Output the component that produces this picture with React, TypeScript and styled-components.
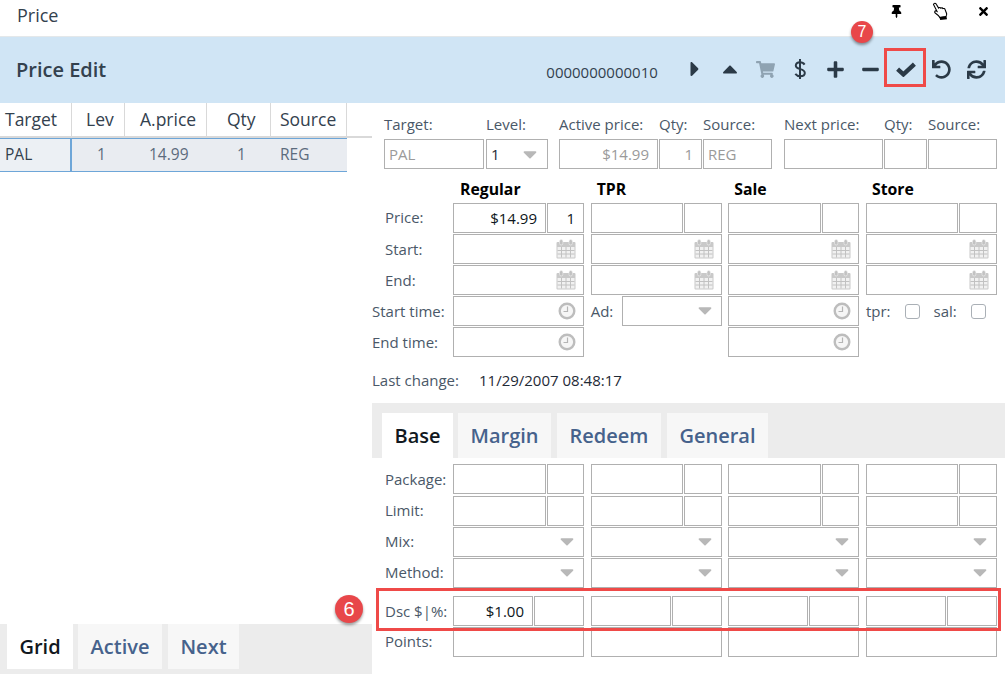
import React from "react";
import styled, { createGlobalStyle } from "styled-components";
import {
  FaThumbtack, FaTimes, FaCaretRight, FaCaretUp, FaShoppingCart,
  FaPlus, FaMinus, FaUndo, FaSync, FaCaretDown,
} from "react-icons/fa";

const Global = createGlobalStyle`
  html, body { margin: 0; padding: 0; background: #fff; }
  body { font-family: "Open Sans", "Liberation Sans", sans-serif; color: #3c4858; overflow: hidden; }
  * { box-sizing: border-box; }
`;

const Page = styled.div`
  width: 1005px; height: 674px; display: flex; flex-direction: column; position: relative; overflow: hidden;
`;
const TitleBar = styled.div`
  height: 37px; flex: none; display: flex; align-items: center; justify-content: space-between;
  padding: 0 15px 7px 17px; border-bottom: 1px solid #e4e8ea;
`;
const TitleText = styled.div`font-size: 18px; color: #33414e;`;
const WinIcons = styled.div`
  display: flex; align-items: center; gap: 29px; color: #000; padding-bottom: 7px;
`;
const Toolbar = styled.div`
  height: 66px; flex: none; background: #d0e5f5; display: flex; align-items: center; padding: 0 11px 0 16px;
`;
const ToolTitle = styled.div`font-size: 20px; font-weight: 600; color: #33414e; flex: 1; padding-bottom: 2px;`;
const Code = styled.div`font-size: 15px; color: #33414e; margin-right: 19.5px; padding-top: 4px;`;
const ToolIcon = styled.div<{ $faded?: boolean; $size?: number }>`
  width: 35.2px; height: 38px; display: flex; align-items: center; justify-content: center; padding-bottom: 2px;
  font-size: ${(p) => p.$size ?? 19}px; color: ${(p) => (p.$faded ? "#8fa3b2" : "#2b3a47")};
`;
const Body = styled.div`flex: 1; display: flex; min-height: 0;`;
const Left = styled.div`width: 372px; flex: none; display: flex; flex-direction: column; justify-content: space-between;`;
const HeadRow = styled.div`
  display: grid; grid-template-columns: 72px 53px 82px 64px 76px 25px; height: 35px;
  border-bottom: 2px solid #d9d9d9;
`;
const HeadCell = styled.div<{ $pl: number }>`
  font-size: 17.5px; color: #33414e; border-right: 1px solid #d9d9d9; display: flex; align-items: center;
  padding-left: ${(p) => p.$pl}px; padding-bottom: 1px;
`;
const DataRow = styled.div`
  display: grid; grid-template-columns: 72px 53px 82px 64px 76px; width: 347px; height: 34px; background: #e9ecf1;
  border-top: 1px solid #6ea6d8; border-bottom: 1px solid #6ea6d8;
`;
const DataCell = styled.div<{ $pl: number; $active?: boolean }>`
  font-size: 15.5px; display: flex; align-items: center; padding-bottom: 2px;
  color: ${(p) => (p.$active ? "#33414e" : "#5c6b7d")};
  padding-left: ${(p) => p.$pl}px;
  ${(p) => p.$active && "border-right: 2px solid #6ea6d8; background: #ecf0f4;"}
`;
const TabStrip = styled.div`
  background: #ececec; display: flex; padding: 0 0 5px 7px; height: 50px; flex: none;
`;
const Tab = styled.div<{ $active?: boolean; $w: number; $ml?: number }>`
  width: ${(p) => p.$w}px; margin-left: ${(p) => p.$ml ?? 0}px;
  display: flex; align-items: center; justify-content: center; font-size: 20px; font-weight: 600;
  background: ${(p) => (p.$active ? "#fff" : "#f7f7f7")};
  color: ${(p) => (p.$active ? "#111820" : "#46628c")};
`;
const Right = styled.div`flex: 1; min-width: 0; display: flex; flex-direction: column;`;
const TopLabels = styled.div`
  display: grid; grid-template-columns: 102px 73px 100px 44px 81px 100px 44px 69px;
  height: 36px; margin-left: 12px; font-size: 15px; line-height: 20px; color: #4a5868;
`;
const TopLabel = styled.div`
  padding: 11px 0 0 0; white-space: nowrap;
`;
const TopFields = styled.div`
  display: flex; margin-left: 12px; height: 30px;
`;
const Box = styled.div<{ $w?: number; $ml?: number; $right?: boolean; $muted?: boolean; $strong?: boolean }>`
  height: 30px; border: 1px solid #b0b0b0; background: #fff; flex: ${(p) => (p.$w ? "none" : 1)};
  width: ${(p) => (p.$w ? `${p.$w}px` : "auto")}; min-width: 0; margin-left: ${(p) => p.$ml ?? 0}px;
  display: flex; align-items: center; justify-content: ${(p) => (p.$right ? "flex-end" : "flex-start")};
  padding: 0 ${(p) => (p.$right ? 8 : 3)}px 0 ${(p) => (p.$right ? 0 : 4)}px;
  font-size: 15px; font-weight: ${(p) => (p.$strong ? 500 : 400)};
  color: ${(p) => (p.$muted ? "#9a9a9a" : p.$strong ? "#0d1620" : "#1f2a36")};
`;
const RowGrid = styled.div<{ $mt?: number }>`
  display: grid; grid-template-columns: 74.33px repeat(4, 131px); column-gap: 6.67px;
  margin-top: ${(p) => p.$mt ?? 1}px; height: 30px; align-items: center;
`;
const Heads = styled(RowGrid)`height: 34px; margin-top: 0; align-items: flex-end;`;
const Head = styled.div<{ $ml: number }>`
  font-size: 15.8px; font-weight: 700; color: #000; margin-left: ${(p) => p.$ml}px; padding-bottom: 3px;
`;
const Label = styled.div<{ $indent?: boolean; $up?: boolean }>`
  font-size: 15px; color: #4a5868; padding-left: ${(p) => (p.$indent ? 13 : 0)}px; white-space: nowrap;
  margin-top: ${(p) => (p.$up ? -2 : 0)}px;
`;
const Pair = styled.div`display: flex; gap: 1px; min-width: 0;`;
const IconBox = styled(Box)`justify-content: flex-end; padding: 0 7px 0 0;`;
const CaretBox = styled(Box)`justify-content: flex-end; padding: 0 5px 2px 0; color: #b8b8b8; font-size: 22px;`;
const LevelBox = styled(Box)`justify-content: space-between; padding: 0 6px 0 4px;`;
const LevelCaret = styled.span`display: flex; color: #b8b8b8; font-size: 22px;`;
const AdCell = styled.div`display: flex; align-items: center; justify-content: space-between;`;
const CheckCell = styled.div`display: flex; align-items: center; font-size: 15px; color: #4a5868;`;
const Check = styled.span`
  width: 15px; height: 15px; border: 1.5px solid #aab0b6; border-radius: 3px; margin: 0 14px; flex: none; background: #fff;
`;
const ChangeRow = styled.div`
  display: flex; height: 46px; align-items: center; font-size: 15px; color: #4a5868;
`;
const ChangeValue = styled.span`color: #1f2a36; margin-left: 20px;`;
const FormTabs = styled.div`
  height: 55px; flex: none; background: #ececec; display: flex; align-items: flex-end; padding-left: 10px;
`;
const FormTab = styled(Tab)`height: 45px;`;
const Lower = styled.div`padding-top: 6px;`;
const RedBox = styled.div`
  position: absolute; left: 376px; top: 588px; width: 625px; height: 43px; border: 3px solid #ef4a48; pointer-events: none;
`;
const Badge = styled.div<{ $x: number; $y: number; $d: number; $fs: number }>`
  position: absolute; left: ${(p) => p.$x - p.$d / 2}px; top: ${(p) => p.$y - p.$d / 2}px;
  width: ${(p) => p.$d}px; height: ${(p) => p.$d}px; border-radius: 50%; background: #e8474a; color: #fff;
  font-size: ${(p) => p.$fs}px; font-family: "Liberation Sans", sans-serif; display: flex; align-items: center; justify-content: center;
  box-shadow: 0 2px 3px rgba(0,0,0,.4);
`;
const CheckOutline = styled.div`
  position: absolute; left: 884px; top: 48px; width: 42px; height: 39px; border: 3px solid #ef4a48; pointer-events: none;
`;

const Calendar = () => (
  <svg width="20" height="20" viewBox="0 0 20 20" fill="none">
    <rect x="0.5" y="3" width="19" height="16.5" rx="1" fill="#c9c9c9" />
    <rect x="1.5" y="8" width="17" height="10.5" fill="#f1f1f1" />
    <path d="M5.5 8v10.5M10 8v10.5M14.5 8v10.5M1.5 11.5h17M1.5 15h17" stroke="#c2c2c2" strokeWidth="1" />
    <rect x="3.5" y="0.5" width="3.4" height="5.5" rx="1.7" fill="#c2c2c2" stroke="#f2f2f2" strokeWidth="0.6" />
    <rect x="13" y="0.5" width="3.4" height="5.5" rx="1.7" fill="#c2c2c2" stroke="#f2f2f2" strokeWidth="0.6" />
  </svg>
);
const ClockIcon = () => (
  <svg width="18" height="18" viewBox="0 0 18 18" fill="none">
    <circle cx="9" cy="9" r="7.3" fill="#f6f6f6" stroke="#bdbdbd" strokeWidth="2.4" />
    <path d="M9.5 4.5v5H5.5" stroke="#b5b5b5" strokeWidth="1.2" />
  </svg>
);
const HandIcon = () => (
  <svg width="16" height="18" viewBox="0 0 16 18" fill="none">
    <path
      d="M1.5 2.5C2 .9 3.6.9 4.3 2.2L6.6 6C7.3 5.3 8.3 5.5 8.8 6.2 9.5 5.6 10.5 5.8 11 6.6 11.8 6.2 12.8 6.6 13.1 7.6L14.6 11.5C15 13 14.5 14 13.6 14.8L8 15.6C7 14.2 5.4 12.5 3.2 11 2.2 10 2.8 8.4 4.3 9L5 9.3Z"
      fill="#fff" stroke="#000" strokeWidth="1.1"
    />
    <path d="M7.4 15L14.4 14 15 17.2 8.2 18Z" fill="#000" />
  </svg>
);
const DollarIcon = () => (
  <svg width="12" height="22" viewBox="0 0 12 22" fill="none" stroke="currentColor" strokeWidth="2">
    <path d="M10.6 6.6C9.6 5 8 4.2 6 4.2 3.5 4.2 1.8 5.5 1.8 7.5c0 4.8 9 2.5 9 7.5 0 2-1.8 3.2-4.6 3.2-2 0-3.7-.9-4.9-2.4" />
    <path d="M6 1v20" />
  </svg>
);
const CheckIcon = () => (
  <svg width="20" height="15" viewBox="0 0 20 15" fill="none" stroke="currentColor" strokeWidth="4.4">
    <path d="M1.6 7.2l5.8 5.2L18.4 2.2" />
  </svg>
);

const sideWidths = [37, 38, 37, 38];
const Cal = () => <IconBox><Calendar /></IconBox>;
const Time = () => <IconBox><ClockIcon /></IconBox>;
const Drop = () => <CaretBox><FaCaretDown /></CaretBox>;
const Split = ({ w, text, sideText, strong }: { w: number; text?: string; sideText?: string; strong?: boolean }) => (
  <Pair>
    <Box $right $strong={strong}>{text}</Box>
    <Box $w={w} $right $strong={strong}>{sideText}</Box>
  </Pair>
);
const Columns = ({ children }: { children: (i: number) => React.ReactNode }) => (
  <>{[0, 1, 2, 3].map((i) => <React.Fragment key={i}>{children(i)}</React.Fragment>)}</>
);

export default function App() {
  return (
    <Page>
      <Global />
      <TitleBar>
        <TitleText>Price</TitleText>
        <WinIcons>
          <FaThumbtack size={13} />
          <HandIcon />
          <FaTimes size={13} />
        </WinIcons>
      </TitleBar>
      <Toolbar>
        <ToolTitle>Price Edit</ToolTitle>
        <Code>0000000000010</Code>
        <ToolIcon $size={24}><FaCaretRight /></ToolIcon>
        <ToolIcon $size={24}><FaCaretUp /></ToolIcon>
        <ToolIcon $faded><FaShoppingCart /></ToolIcon>
        <ToolIcon><DollarIcon /></ToolIcon>
        <ToolIcon><FaPlus /></ToolIcon>
        <ToolIcon><FaMinus /></ToolIcon>
        <ToolIcon><CheckIcon /></ToolIcon>
        <ToolIcon><FaUndo /></ToolIcon>
        <ToolIcon><FaSync /></ToolIcon>
      </Toolbar>
      <Body>
        <Left>
          <div>
            <HeadRow>
              <HeadCell $pl={5}>Target</HeadCell>
              <HeadCell $pl={14}>Lev</HeadCell>
              <HeadCell $pl={15}>A.price</HeadCell>
              <HeadCell $pl={20}>Qty</HeadCell>
              <HeadCell $pl={9}>Source</HeadCell>
            </HeadRow>
            <DataRow>
              <DataCell $active $pl={5}>PAL</DataCell>
              <DataCell $pl={25}>1</DataCell>
              <DataCell $pl={24}>14.99</DataCell>
              <DataCell $pl={30}>1</DataCell>
              <DataCell $pl={9}>REG</DataCell>
            </DataRow>
          </div>
          <TabStrip>
            <Tab $active $w={66}>Grid</Tab>
            <Tab $w={84} $ml={5}>Active</Tab>
            <Tab $w={71} $ml={6}>Next</Tab>
          </TabStrip>
        </Left>
        <Right>
          <TopLabels>
            <TopLabel>Target:</TopLabel>
            <TopLabel>Level:</TopLabel>
            <TopLabel>Active price:</TopLabel>
            <TopLabel>Qty:</TopLabel>
            <TopLabel>Source:</TopLabel>
            <TopLabel>Next price:</TopLabel>
            <TopLabel>Qty:</TopLabel>
            <TopLabel>Source:</TopLabel>
          </TopLabels>
          <TopFields>
            <Box $w={100} $muted>PAL</Box>
            <LevelBox $w={62} $ml={2}>1<LevelCaret><FaCaretDown /></LevelCaret></LevelBox>
            <Box $w={99} $ml={11} $right $muted>$14.99</Box>
            <Box $w={43} $ml={1} $right $muted>1</Box>
            <Box $w={69} $ml={1} $muted>REG</Box>
            <Box $w={99} $ml={12} />
            <Box $w={43} $ml={1} />
            <Box $w={69} $ml={1} />
          </TopFields>
          <Heads>
            <span />
            <Head $ml={7}>Regular</Head>
            <Head $ml={6}>TPR</Head>
            <Head $ml={6}>Sale</Head>
            <Head $ml={6}>Store</Head>
          </Heads>
          <RowGrid $mt={0}>
            <Label $indent $up>Price:</Label>
            <Columns>{(i) => (i === 0 ? <Split w={37} text="$14.99" sideText="1" strong /> : <Split w={sideWidths[i]} />)}</Columns>
          </RowGrid>
          <RowGrid>
            <Label $indent>Start:</Label>
            <Columns>{() => <Cal />}</Columns>
          </RowGrid>
          <RowGrid>
            <Label $indent>End:</Label>
            <Columns>{() => <Cal />}</Columns>
          </RowGrid>
          <RowGrid>
            <Label>Start time:</Label>
            <Time />
            <AdCell><Label>Ad:</Label><CaretBox $w={100}><FaCaretDown /></CaretBox></AdCell>
            <Time />
            <CheckCell>tpr:<Check />sal:<Check /></CheckCell>
          </RowGrid>
          <RowGrid>
            <Label>End time:</Label>
            <Time />
            <span />
            <Time />
            <span />
          </RowGrid>
          <ChangeRow>Last change:<ChangeValue>11/29/2007 08:48:17</ChangeValue></ChangeRow>
          <FormTabs>
            <FormTab $active $w={71}>Base</FormTab>
            <FormTab $w={93} $ml={5}>Margin</FormTab>
            <FormTab $w={104} $ml={6}>Redeem</FormTab>
            <FormTab $w={101} $ml={6}>General</FormTab>
          </FormTabs>
          <Lower>
            <RowGrid $mt={0}><Label $indent>Package:</Label><Columns>{(i) => <Split w={sideWidths[i]} />}</Columns></RowGrid>
            <RowGrid $mt={2}><Label $indent $up>Limit:</Label><Columns>{(i) => <Split w={sideWidths[i]} />}</Columns></RowGrid>
            <RowGrid><Label $indent $up>Mix:</Label><Columns>{() => <Drop />}</Columns></RowGrid>
            <RowGrid><Label $indent $up>Method:</Label><Columns>{() => <Drop />}</Columns></RowGrid>
            <RowGrid $mt={8}>
              <Label $indent>Dsc $|%:</Label>
              <Columns>{(i) => (i === 0 ? <Split w={50} text="$1.00" strong /> : <Split w={50} />)}</Columns>
            </RowGrid>
            <RowGrid><Label $indent $up>Points:</Label><Columns>{() => <Box />}</Columns></RowGrid>
          </Lower>
        </Right>
      </Body>
      <RedBox />
      <CheckOutline />
      <Badge $x={862} $y={32} $d={22} $fs={16}>7</Badge>
      <Badge $x={349} $y={609} $d={28} $fs={20}>6</Badge>
    </Page>
  );
}
